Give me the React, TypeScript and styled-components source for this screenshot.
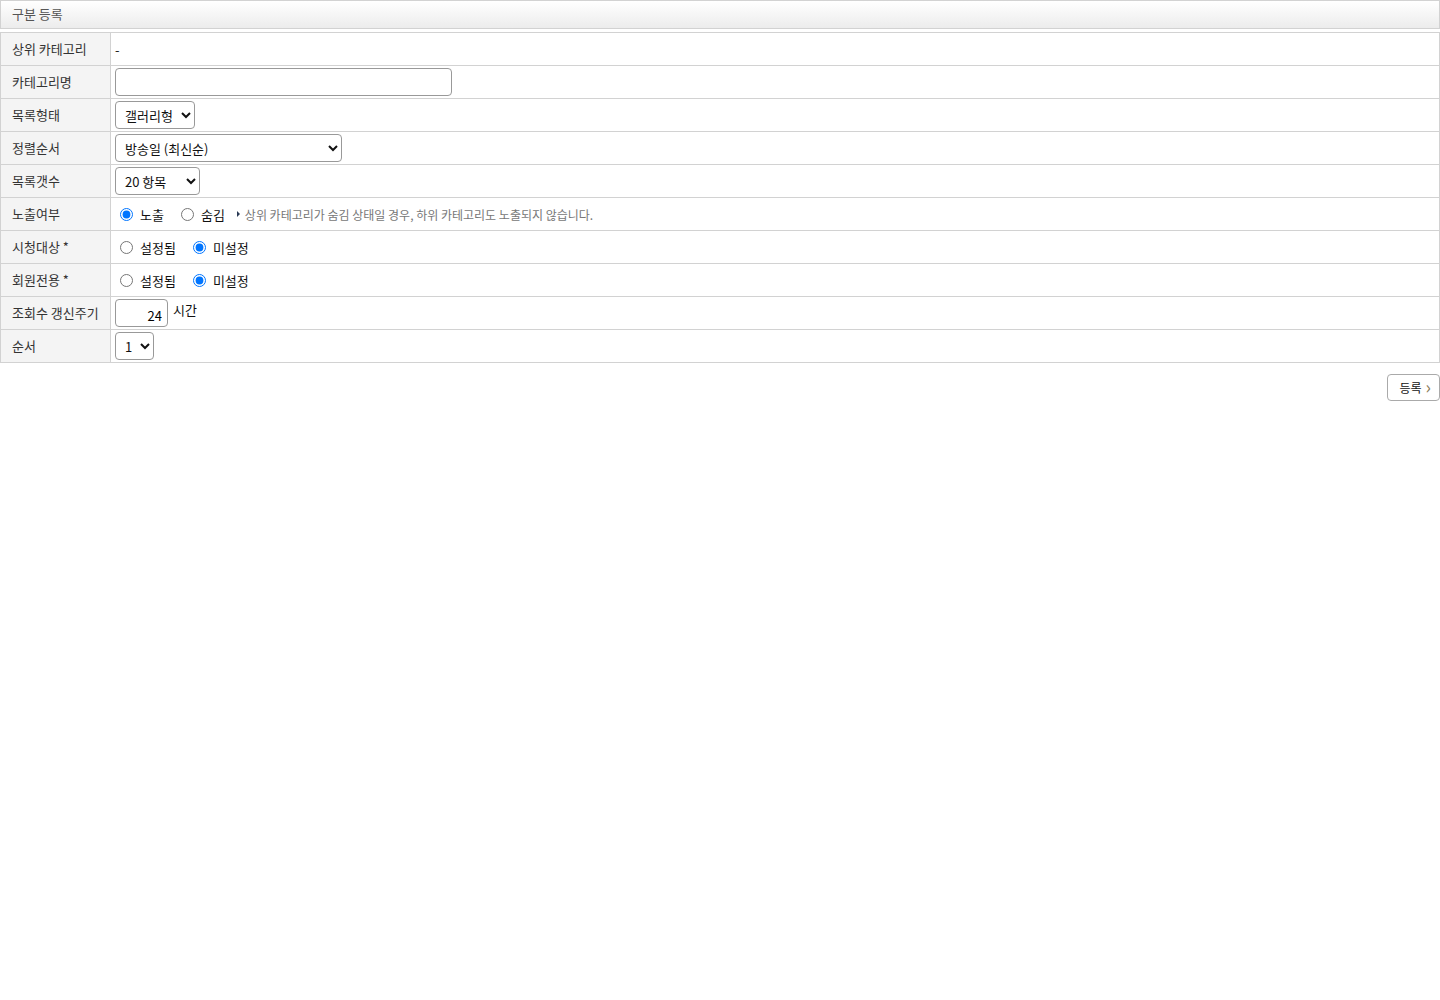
import styled, { createGlobalStyle } from 'styled-components';

const GlobalStyle = createGlobalStyle`
   body {
      margin: 0;
      background: #fff;
      font-family: 'Noto Sans CJK KR', 'Noto Sans', sans-serif;
      font-size: 13px;
      color: #222;
   }
`;

const rows = [
   { label: '상위 카테고리', kind: 'text' },
   { label: '카테고리명', kind: 'name' },
   { label: '목록형태', kind: 'listType' },
   { label: '정렬순서', kind: 'sort' },
   { label: '목록갯수', kind: 'count' },
   { label: '노출여부', kind: 'visible' },
   { label: '시청대상 *', kind: 'audience' },
   { label: '회원전용 *', kind: 'member' },
   { label: '조회수 갱신주기', kind: 'refresh' },
   { label: '순서', kind: 'order' },
];

const Page = () => {
   const renderField = (kind: string) => {
      switch (kind) {
         case 'text':
            return <span>-</span>;
         case 'name':
            return <TextInput type='text' />;
         case 'listType':
            return (
               <Select $width={80} defaultValue='gallery'>
                  <option value='gallery'>갤러리형</option>
                  <option value='list'>리스트형</option>
               </Select>
            );
         case 'sort':
            return (
               <Select $width={227} defaultValue='new'>
                  <option value='new'>방송일 (최신순)</option>
                  <option value='old'>방송일 (오래된순)</option>
               </Select>
            );
         case 'count':
            return (
               <Select $width={85} defaultValue='20'>
                  <option value='10'>10 항목</option>
                  <option value='20'>20 항목</option>
                  <option value='30'>30 항목</option>
               </Select>
            );
         case 'visible':
            return (
               <RadioGroup>
                  <RadioLabel>
                     <input type='radio' name='visible' defaultChecked />
                     노출
                  </RadioLabel>
                  <RadioLabel>
                     <input type='radio' name='visible' />
                     숨김
                  </RadioLabel>
                  <Hint>상위 카테고리가 숨김 상태일 경우, 하위 카테고리도 노출되지 않습니다.</Hint>
               </RadioGroup>
            );
         case 'audience':
         case 'member':
            return (
               <RadioGroup>
                  <RadioLabel>
                     <input type='radio' name={kind} />
                     설정됨
                  </RadioLabel>
                  <RadioLabel>
                     <input type='radio' name={kind} defaultChecked />
                     미설정
                  </RadioLabel>
               </RadioGroup>
            );
         case 'refresh':
            return (
               <RefreshWrap>
                  <NumberInput type='text' defaultValue='24' />
                  <Unit>시간</Unit>
               </RefreshWrap>
            );
         case 'order':
            return (
               <Select $width={39} defaultValue='1'>
                  <option value='1'>1</option>
                  <option value='2'>2</option>
               </Select>
            );
         default:
            return null;
      }
   };

   return (
      <Wrapper>
         <TitleBar>구분 등록</TitleBar>
         <FormTable>
            <tbody>
               {rows.map((row) => (
                  <tr key={row.label}>
                     <Th>{row.label}</Th>
                     <Td>{renderField(row.kind)}</Td>
                  </tr>
               ))}
            </tbody>
         </FormTable>
         <Actions>
            <SubmitButton type='button'>
               등록 <Arrow>›</Arrow>
            </SubmitButton>
         </Actions>
      </Wrapper>
   );
};

const Wrapper = styled.div`
   width: 1440px;
`;

const TitleBar = styled.div`
   height: 27px;
   line-height: 26px;
   padding: 0 11px;
   border: 1px solid #d2d2d2;
   background: linear-gradient(to bottom, #ffffff, #ececec);
   color: #555;
   font-size: 13px;
`;

const FormTable = styled.table`
   width: 100%;
   margin-top: 3px;
   border-collapse: collapse;
   border: 1px solid #d2d2d2;
`;

const Th = styled.th`
   box-sizing: border-box;
   width: 110px;
   height: 33px;
   padding: 0 0 1px 11px;
   background: #f4f4f4;
   border: 1px solid #d2d2d2;
   color: #333;
   font-size: 13px;
   font-weight: normal;
   text-align: left;
   white-space: nowrap;
`;

const Td = styled.td`
   box-sizing: border-box;
   height: 33px;
   padding: 0 4px;
   border: 1px solid #d2d2d2;
   vertical-align: middle;
   font-size: 13px;
`;

const TextInput = styled.input`
   box-sizing: border-box;
   display: block;
   width: 337px;
   height: 28px;
   border: 1px solid #999;
   border-radius: 4px;
   font-family: inherit;
`;

const Select = styled.select<{ $width: number }>`
   box-sizing: border-box;
   display: block;
   width: ${(p) => p.$width}px;
   height: 28px;
   padding: 0 4px 0 5px;
   border: 1px solid #999;
   border-radius: 4px;
   background: #fff;
   font-family: inherit;
   font-size: 13px;
   color: #111;
`;

const RadioGroup = styled.div`
   display: flex;
   align-items: center;
   padding-left: 2px;
`;

const RadioLabel = styled.label`
   display: flex;
   align-items: center;
   margin-right: 14px;
   color: #111;

   input {
      margin: 0 7px 0 3px;
      width: 13px;
      height: 13px;
   }
`;

const Hint = styled.span`
   position: relative;
   margin-left: -2px;
   padding-left: 8px;
   color: #777;
   font-size: 12px;

   &::before {
      content: '';
      position: absolute;
      left: 0;
      top: 50%;
      margin-top: -3px;
      border-left: 3px solid #2a3a55;
      border-top: 3px solid transparent;
      border-bottom: 3px solid transparent;
   }
`;

const RefreshWrap = styled.div`
   display: flex;
   align-items: flex-start;
`;

const NumberInput = styled.input`
   box-sizing: border-box;
   width: 53px;
   height: 28px;
   padding: 4px 5px 0 0;
   border: 1px solid #999;
   border-radius: 4px;
   text-align: right;
   font-family: inherit;
   font-size: 13px;
`;

const Unit = styled.span`
   margin-left: 5px;
   line-height: 22px;
   color: #111;
`;

const Actions = styled.div`
   display: flex;
   justify-content: flex-end;
   margin-top: 11px;
`;

const SubmitButton = styled.button`
   box-sizing: border-box;
   display: flex;
   align-items: center;
   gap: 4px;
   height: 27px;
   padding: 0 8px 0 11px;
   border: 1px solid #aaa;
   border-radius: 4px;
   background: #fff;
   font-family: inherit;
   font-size: 12px;
   color: #111;
`;

const Arrow = styled.span`
   color: #8a7a55;
   font-size: 18px;
   line-height: 1;
   margin-top: -3px;
`;

const App = () => (
   <>
      <GlobalStyle />
      <Page />
   </>
);

export default App;
